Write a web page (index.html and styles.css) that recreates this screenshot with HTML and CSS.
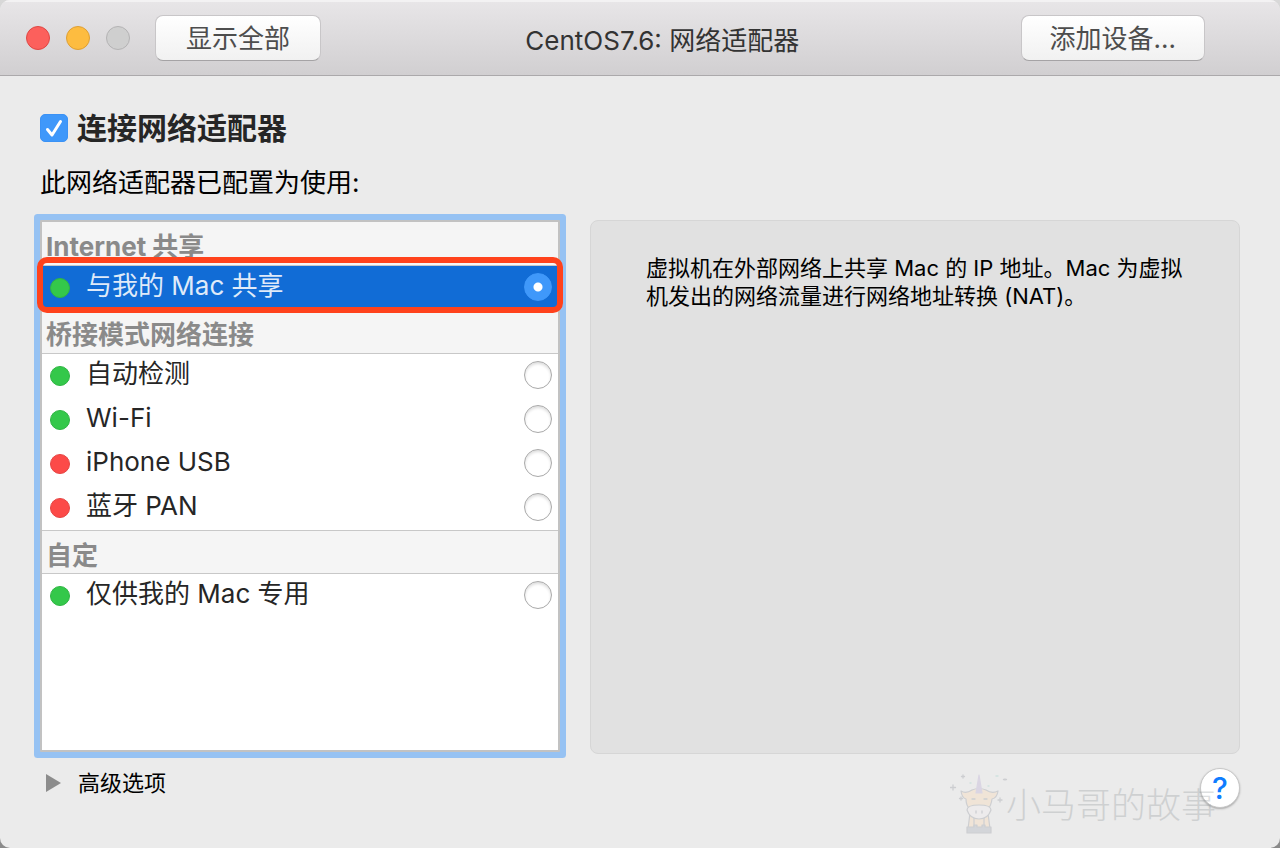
FILE: index.html
```html
<!DOCTYPE html>
<html lang="zh-CN">
<head>
<meta charset="utf-8">
<meta name="viewport" content="width=device-width, initial-scale=1">
<title>CentOS7.6: 网络适配器</title>
<link rel="stylesheet" href="styles.css">
</head>
<body>
<div class="window">
  <header class="titlebar">
    <div class="lights">
      <button class="light light-close" type="button" aria-label="关闭"></button>
      <button class="light light-min" type="button" aria-label="最小化"></button>
      <button class="light light-off" type="button" aria-label="缩放" disabled></button>
    </div>
    <button class="tool" type="button">显示全部</button>
    <h1 class="title">CentOS7.6: 网络适配器</h1>
    <button class="tool" type="button">添加设备...</button>
  </header>
  <main class="content">
    <label class="connect">
      <span class="tick">
        <input class="tick-box" type="checkbox" checked>
        <svg class="tick-mark" viewBox="0 0 28 28" aria-hidden="true"><path d="M7.500 15.500 12 21 20.500 7.500" fill="none" stroke="#fff" stroke-width="3" stroke-linecap="round" stroke-linejoin="round"/></svg>
      </span>
      连接网络适配器
    </label>
    <p class="lead">此网络适配器已配置为使用:</p>
    <div class="panels">
      <div class="list" role="radiogroup" aria-label="网络适配器">
        <h2 class="group">Internet 共享</h2>
        <label class="row selected"><span class="dot on"></span><span class="name">与我的 Mac 共享</span><input class="radio" type="radio" name="net" checked></label>
        <h2 class="group">桥接模式网络连接</h2>
        <label class="row"><span class="dot on"></span><span class="name">自动检测</span><input class="radio" type="radio" name="net"></label>
        <label class="row"><span class="dot on"></span><span class="name">Wi-Fi</span><input class="radio" type="radio" name="net"></label>
        <label class="row"><span class="dot off"></span><span class="name">iPhone USB</span><input class="radio" type="radio" name="net"></label>
        <label class="row"><span class="dot off"></span><span class="name">蓝牙 PAN</span><input class="radio" type="radio" name="net"></label>
        <h2 class="group ruled">自定</h2>
        <label class="row"><span class="dot on"></span><span class="name">仅供我的 Mac 专用</span><input class="radio" type="radio" name="net"></label>
      </div>
      <p class="info">虚拟机在外部网络上共享 Mac 的 IP 地址。Mac 为虚拟机发出的网络流量进行网络地址转换 (NAT)。</p>
    </div>
    <div class="bottom">
      <button class="advanced" type="button" aria-expanded="false">
        <svg class="arrow" viewBox="0 0 16 18" aria-hidden="true"><path d="M0 0 15 9 0 18z" fill="#8c8c8c"/></svg>
        高级选项
      </button>
      <button class="help" type="button" aria-label="帮助">?</button>
    </div>
  </main>
  <div class="mark">
    <svg class="unicorn" viewBox="0 0 62 62" aria-hidden="true">
      <g stroke="#777c88" stroke-width="1.200" stroke-linejoin="round">
        <path d="M20 39 18 55h22l-2-16z" fill="#ffd3a0"/>
        <path d="M24 42v12M34 42v12" fill="none"/>
        <path d="M11 17q5 3 11-1 7-3 14 0 6 4 12 1-1 7-6 8-1 7-4 10H20q-4-3-4-10-4-1-5-8z" fill="#ffd3a0"/>
        <path d="M17 36q0-5 12-5t12 5q-3 9-12 9t-12-9z" fill="#f4eef0"/>
        <path d="M17 53h7v-2h3v2h5v-2h3v2h6v6H17z" fill="#8f96a6"/>
        <path d="M26 19 29 1l3 18z" fill="#ab98ce" stroke="#ab98ce"/>
      </g>
      <g fill="none" stroke="#777c88" stroke-width="1.300" stroke-linecap="round">
        <path d="M22 25h3M34 25h3M26 37v2M32 37v2M13 1v3M11.500 2.500h3M3 11v5M.5 13.500h5M55 5v1M53.500 5.500h3M50 24v4M48 26h4M11 23v3M9.500 24.500h3"/>
        <path d="M46 2h2M38 12h1M20 9h1" stroke="#81c9bd"/>
      </g>
    </svg>
    <span>小马哥的故事</span>
  </div>
</div>
</body>
</html>
```
FILE: styles.css
```css
* { box-sizing: border-box; }

body {
  margin: 0;
  background: linear-gradient(#d8d8d8, #8a8a8a);
  font-family: Inter, "Noto Sans CJK SC", sans-serif;
  color: #000;
}

button, input { margin: 0; font: inherit; }

.window {
  position: relative;
  display: flex;
  flex-direction: column;
  min-height: 100vh;
  overflow: hidden;
  border-radius: 10px;
  background: #ebebeb;
}

.titlebar {
  display: flex;
  align-items: center;
  height: 76px;
  padding: 0 75px 0 26px;
  background: linear-gradient(#e8e6e8, #d1cfd1);
  border-bottom: 1px solid #aba9ab;
  box-shadow: inset 0 2px 0 #f3f2f3;
}

.lights { display: flex; gap: 16px; margin-right: 25px; }

.light {
  width: 24px;
  height: 24px;
  padding: 0;
  border: 1px solid;
  border-radius: 50%;
}
.light-close { background: #fc605c; border-color: #df4744; }
.light-min { background: #fdbc40; border-color: #de9f34; }
.light-off { background: #cfcfcf; border-color: #b4b3b4; }

.tool {
  height: 46px;
  padding: 2px 28px 0;
  border: 1px solid #c8c6c8;
  border-bottom-color: #a5a3a5;
  border-radius: 8px;
  background: linear-gradient(#fff, #f1f1f1);
  color: #4d4d4d;
  font-size: 26px;
  line-height: 42px;
}
.tool:first-of-type { min-width: 166px; }

.title {
  flex: 1;
  margin: 6px 17px 0 0;
  text-align: center;
  font-size: 26px;
  font-weight: 400;
  line-height: 36px;
  color: #333;
}

.content {
  flex: 1;
  display: flex;
  flex-direction: column;
  padding: 28px 40px 40px;
}

.connect {
  display: flex;
  align-items: center;
  align-self: flex-start;
  gap: 9px;
  height: 48px;
  font-size: 30px;
  font-weight: 700;
  line-height: 46px;
  color: #262626;
}

.tick { position: relative; width: 28px; height: 28px; }
.tick-box {
  display: block;
  width: 28px;
  height: 28px;
  appearance: none;
  border: 1px solid #3b92f5;
  border-radius: 5px;
  background: #3f98fa;
}
.tick-mark { position: absolute; inset: 0; pointer-events: none; }

.lead { margin: 12px 0 18px; font-size: 26px; line-height: 38px; }

.panels {
  flex: 1;
  display: grid;
  grid-template-columns: 4fr 5fr;
  gap: 30px;
}

.list {
  margin-bottom: 2px;
  border: 2px solid #c2c2c2;
  background: #fff;
  box-shadow: 0 0 0 6px #96c2f3;
  border-radius: 1px;
  font-size: 26px;
}

.group {
  height: 44px;
  margin: 0;
  padding: 5px 4px 0;
  border-bottom: 1px solid #c8c8c8;
  background: #f5f5f5;
  color: #8a8a8a;
  font-size: 26px;
  font-weight: 700;
  line-height: 40px;
}
.ruled { border-top: 1px solid #c8c8c8; }

.row {
  position: relative;
  display: flex;
  align-items: center;
  height: 44px;
  padding: 0 6px 2px 8px;
  color: #262626;
}

.selected { background: #116cd6; color: #dfeaf9; }
.selected::after {
  content: "";
  position: absolute;
  inset: -9px -5px -3px;
  border: 6px solid #ff421c;
  border-radius: 10px;
  pointer-events: none;
}

.dot {
  width: 20px;
  height: 20px;
  margin: 2px 16px 0 0;
  border: 1px solid;
  border-radius: 50%;
}
.on { background: #34c84a; border-color: #2fb543; }
.off { background: #fc4a48; border-color: #e64442; }

.name { flex: 1; padding-bottom: 2px; line-height: 40px; }

.radio {
  width: 28px;
  height: 28px;
  appearance: none;
  border: 1px solid #a9a9a9;
  border-radius: 50%;
  background: #fff;
  box-shadow: inset 0 2px 3px #ddd;
}
.radio:checked {
  border-color: #3f98fa;
  background: radial-gradient(circle, #fff 4px, #3f98fa 5px);
  box-shadow: none;
}

.info {
  margin: 0;
  padding: 33px 44px 33px 55px;
  border: 1px solid #d6d6d6;
  border-radius: 8px;
  background: #e1e1e1;
  font-size: 22px;
  line-height: 28px;
}

.bottom {
  display: flex;
  align-items: flex-start;
  justify-content: space-between;
  padding-top: 14px;
}

.advanced {
  display: flex;
  align-items: center;
  gap: 16px;
  padding: 0 6px;
  border: 0;
  background: none;
  color: #000;
  font-size: 22px;
  line-height: 30px;
}
.arrow { width: 16px; height: 18px; }

.help {
  width: 40px;
  height: 40px;
  padding: 0;
  border: 1px solid #c8c8c8;
  border-radius: 50%;
  background: #fff;
  box-shadow: 0 1px 2px #aaa;
  color: #0f7dff;
  font-size: 30px;
  font-weight: 500;
  line-height: 38px;
}

.mark {
  position: absolute;
  right: 64px;
  bottom: 12px;
  display: flex;
  align-items: center;
  color: #7c8488;
  font-size: 35px;
  font-weight: 300;
  line-height: 62px;
  opacity: 0.25;
  pointer-events: none;
}
.unicorn { width: 62px; height: 62px; margin-right: -6px; }
```
